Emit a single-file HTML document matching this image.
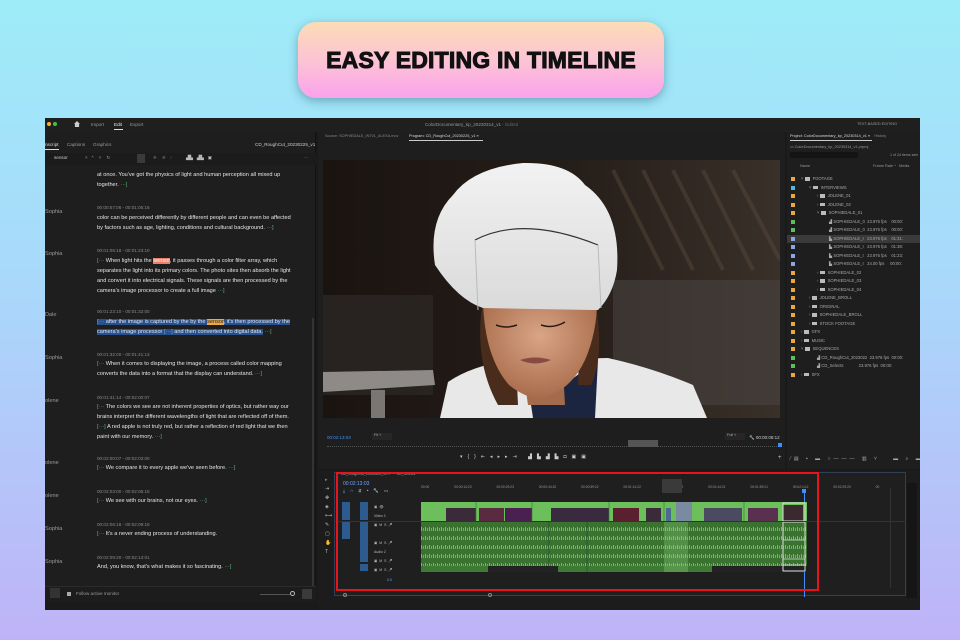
<!DOCTYPE html>
<html><head><meta charset="utf-8">
<style>
*{margin:0;padding:0;box-sizing:border-box}
body{width:960px;height:640px;overflow:hidden;background:linear-gradient(180deg,#9eecf8 0%,#a9d8fb 45%,#bfb3f7 100%);font-family:"Liberation Sans",sans-serif;position:relative}
.pill{position:absolute;left:298px;top:22px;width:366px;height:76px;border-radius:18px;background:linear-gradient(180deg,#fcdcb6 0%,#fcc4d4 50%,#fba2ec 100%);box-shadow:0 3px 10px rgba(40,90,110,.45);display:flex;align-items:center;justify-content:center;font-weight:900;font-size:23px;letter-spacing:.2px;color:#111;-webkit-text-stroke:1px #111}
.app{position:absolute;left:45px;top:118px;width:875px;height:492px;background:#1a1a1a;overflow:hidden}
.a{position:absolute;white-space:nowrap}
.t{font-size:5.6px;color:#e6e6e6;line-height:10px}
.ts{font-size:4.6px;color:#8a8a8a}
.nm{font-size:5.6px;color:#9a9a9a}
.g{color:#5fb07a}
.dim{font-size:4.6px;color:#9a9a9a}
.prow{position:absolute;left:0;height:8px;width:134px;font-size:4.2px;color:#a8a8a8;white-space:nowrap;line-height:8px}
.sq{position:absolute;left:4px;top:2px;width:4px;height:4px}
.fold{display:inline-block;width:5px;height:3.5px;background:#bbb;margin-right:3px;vertical-align:middle}
</style></head><body>
<div class="pill">EASY EDITING IN TIMELINE</div>

<div class="app">
 <div class="a" style="left:0;top:0;width:875px;height:14px;background:#1f1f1f"></div>
 <div class="a" style="left:2px;top:4px;width:4px;height:4px;border-radius:50%;background:#f0b429"></div>
 <div class="a" style="left:8px;top:4px;width:4px;height:4px;border-radius:50%;background:#3fc24a"></div>
 <div class="a" style="left:29px;top:3px;width:6px;height:6px;background:#ccc;clip-path:polygon(50% 0,100% 50%,85% 50%,85% 100%,15% 100%,15% 50%,0 50%)"></div>
 <div class="a dim" style="left:46px;top:4px">Import</div>
 <div class="a dim" style="left:69px;top:4px;color:#eee">Edit</div>
 <div class="a" style="left:69px;top:11px;width:9px;height:1px;background:#ddd"></div>
 <div class="a dim" style="left:85px;top:4px">Export</div>
 <div class="a dim" style="left:380px;top:4px;color:#999">ColorDocumentary_kp_20230314_v1 <span style="color:#666">- Edited</span></div>
 <div class="a dim" style="left:812px;top:4px;font-size:3.8px">TEXT-BASED EDITING</div>

 <div class="a" style="left:0;top:14px;width:271px;height:470px;background:#1e1e1e;border-right:1px solid #111"></div>
 <div class="a dim" style="left:0;top:24px;color:#ddd">nscript</div>
 <div class="a" style="left:0;top:31px;width:14px;height:1px;background:#ddd"></div>
 <div class="a dim" style="left:22px;top:24px">Captions</div>
 <div class="a dim" style="left:48px;top:24px">Graphics</div>
 <div class="a dim" style="left:210px;top:24px;color:#ccc">CD_RoughCut_20230225_v1</div>
 <div class="a" style="left:0;top:35px;width:271px;height:12px;background:#1b1b1b"></div>
 <div class="a dim" style="left:9px;top:37px;color:#ccc">sensor</div>
 <div class="a dim" style="left:40px;top:37px">×&nbsp;&nbsp;&nbsp;^&nbsp;&nbsp;&nbsp;&nbsp;˅&nbsp;&nbsp;&nbsp;&nbsp;↻</div>
 <div class="a" style="left:92px;top:36px;width:8px;height:9px;background:#3a3a3a"></div>
 <div class="a dim" style="left:108px;top:37px;color:#666">✥&nbsp;&nbsp;&nbsp;&nbsp;✥&nbsp;&nbsp;&nbsp;&nbsp;⁄</div>
 <div class="a dim" style="left:141px;top:37px;color:#bbb">▟▙&nbsp;&nbsp;&nbsp;▟▙&nbsp;&nbsp;&nbsp;▣</div>
 <div class="a dim" style="left:259px;top:37px">···</div>
 <div class="a" style="left:267px;top:200px;width:2px;height:270px;background:#333"></div>

 <div class="a t" style="left:52px;top:52px">at once. You've got the physics of light and human perception all mixed up<br>together. <span class="g">···]</span></div>

 <div class="a nm" style="left:0;top:91px">Sophia</div>
 <div class="a ts" style="left:52px;top:87px">00:00:57:06 - 00:01:05:16</div>
 <div class="a t" style="left:52px;top:95px">color can be perceived differently by different people and can even be affected<br>by factors such as age, lighting, conditions and cultural background. <span class="g">···]</span></div>

 <div class="a nm" style="left:0;top:133px">Sophia</div>
 <div class="a ts" style="left:52px;top:130px">00:01:05:18 - 00:01:23:10</div>
 <div class="a t" style="left:52px;top:138px"><span class="g">[···</span> When light hits the <span style="background:#e8806d;color:#fff">sensor</span>, it passes through a color filter array, which<br>separates the light into its primary colors. The photo sites then absorb the light<br>and convert it into electrical signals. These signals are then processed by the<br>camera's image processor to create a full image <span class="g">···]</span></div>

 <div class="a nm" style="left:0;top:194px">Dale</div>
 <div class="a ts" style="left:52px;top:191px">00:01:23:10 - 00:01:32:00</div>
 <div class="a t" style="left:52px;top:199px"><span style="background:#27508f"><span class="g">[···</span> after the image is captured by the by the <span style="background:#e8a94a;color:#222">sensor</span>, it's then processed by the</span><br><span style="background:#27508f">camera's image processor <span style="color:#7ab">[···]</span> and then converted into digital data.</span> <span class="g">···]</span></div>

 <div class="a nm" style="left:0;top:237px">Sophia</div>
 <div class="a ts" style="left:52px;top:234px">00:01:32:00 - 00:01:41:13</div>
 <div class="a t" style="left:52px;top:241px"><span class="g">[···</span> When it comes to displaying the image, a process called color mapping<br>converts the data into a format that the display can understand. <span class="g">···]</span></div>

 <div class="a nm" style="left:0;top:280px">olene</div>
 <div class="a ts" style="left:52px;top:277px">00:01:41:14 - 00:02:00:07</div>
 <div class="a t" style="left:52px;top:284px"><span class="g">[···</span> The colors we see are not inherent properties of optics, but rather way our<br>brains interpret the different wavelengths of light that are reflected off of them.<br><span class="g">[···]</span> A red apple is not truly red, but rather a reflection of red light that we then<br>paint with our memory. <span class="g">···]</span></div>

 <div class="a nm" style="left:0;top:342px">olene</div>
 <div class="a ts" style="left:52px;top:338px">00:02:00:07 - 00:02:03:00</div>
 <div class="a t" style="left:52px;top:345px"><span class="g">[···</span> We compare it to every apple we've seen before. <span class="g">···]</span></div>

 <div class="a nm" style="left:0;top:375px">olene</div>
 <div class="a ts" style="left:52px;top:371px">00:02:03:00 - 00:02:06:15</div>
 <div class="a t" style="left:52px;top:378px"><span class="g">[···</span> We see with our brains, not our eyes. <span class="g">···]</span></div>

 <div class="a nm" style="left:0;top:408px">Sophia</div>
 <div class="a ts" style="left:52px;top:404px">00:02:06:18 - 00:02:09:16</div>
 <div class="a t" style="left:52px;top:411px"><span class="g">[···</span> It's a never ending process of understanding.</div>

 <div class="a nm" style="left:0;top:441px">Sophia</div>
 <div class="a ts" style="left:52px;top:437px">00:02:09:20 - 00:02:13:01</div>
 <div class="a t" style="left:52px;top:444px">And, you know, that's what makes it so fascinating. <span class="g">···]</span></div>

 <div class="a" style="left:0;top:468px;width:271px;height:16px;background:#1c1c1c;border-top:1px solid #2a2a2a"></div>
 <div class="a" style="left:5px;top:470px;width:10px;height:10px;background:#333"></div>
 <div class="a" style="left:22px;top:474px;width:4px;height:4px;background:#aaa"></div>
 <div class="a dim" style="left:31px;top:473px">Follow active monitor</div>
 <div class="a" style="left:215px;top:476px;width:30px;height:1px;background:#555"></div>
 <div class="a" style="left:245px;top:473px;width:5px;height:5px;border:1px solid #bbb;border-radius:50%"></div>
 <div class="a" style="left:257px;top:471px;width:10px;height:10px;background:#3a3a3a"></div>

 <div class="a" style="left:273px;top:14px;width:467px;height:337px;background:#1e1e1e"></div>
 <div class="a" style="left:280px;top:16px;font-size:3.8px;color:#888">Source: SOPHIEDALE_INT01_ALEXA.mov</div>
 <div class="a" style="left:364px;top:16px;font-size:3.8px;color:#ddd">Program: CD_RoughCut_20230225_v1 ≡</div>
 <div class="a" style="left:364px;top:22px;width:74px;height:1px;background:#ccc"></div>
 <svg class="a" style="left:278px;top:42px" width="457" height="258" viewBox="0 0 457 258">
  <defs>
   <linearGradient id="bg" x1="0" y1="0" x2="1" y2="0"><stop offset="0" stop-color="#1a1411"/><stop offset=".5" stop-color="#241c17"/><stop offset="1" stop-color="#3a302a"/></linearGradient>
   <linearGradient id="hat" x1="0" y1="0" x2="0" y2="1"><stop offset="0" stop-color="#f2f2f2"/><stop offset="1" stop-color="#dadada"/></linearGradient>
   <radialGradient id="face" cx=".5" cy=".4" r=".6"><stop offset="0" stop-color="#d9a585"/><stop offset="1" stop-color="#a86c4c"/></radialGradient>
  </defs>
  <rect width="457" height="258" fill="url(#bg)"/>
  <g stroke="#5a4a3c" stroke-width="4" opacity=".45">
   <line x1="290" y1="10" x2="340" y2="110"/><line x1="320" y1="10" x2="370" y2="110"/><line x1="350" y1="10" x2="400" y2="110"/><line x1="380" y1="10" x2="430" y2="110"/><line x1="410" y1="10" x2="457" y2="100"/>
  </g>
  <rect x="290" y="120" width="167" height="125" fill="#47423f" opacity=".6"/>
  <rect x="0" y="135" width="110" height="100" fill="#2e2926" opacity=".7"/>
  <path d="M0 212 L110 210 L112 225 L0 232 Z" fill="#8d8a87"/>
  <rect x="48" y="230" width="14" height="28" fill="#7a7674"/>
  <!-- shoulders -->
  <path d="M117 258 L125 222 Q150 205 190 200 L285 198 Q330 208 370 225 L384 258 Z" fill="#e8e8e8"/>
  <path d="M205 225 L245 222 L275 200 L272 258 L210 258 Z" fill="#1b2540"/>
  <!-- hair -->
  <path d="M160 140 Q150 200 175 245 L195 245 L190 140 Z" fill="#4a2c1c"/>
  <path d="M272 140 Q282 195 268 225 L255 225 L258 140 Z" fill="#4a2c1c"/>
  <!-- neck -->
  <path d="M200 210 L240 210 L242 245 L205 245 Z" fill="#a46a4c"/>
  <!-- face -->
  <path d="M160 135 Q160 195 186 225 Q205 240 220 238 Q248 230 262 200 Q275 170 274 135 Z" fill="url(#face)"/>
  <path d="M197 200 Q212 195 228 200 Q212 207 197 200Z" fill="#8a4a44"/>
  <path d="M173 165 Q183 169 194 165 M218 165 Q230 169 242 162" stroke="#2a1a14" stroke-width="1.5" fill="none"/>
  <!-- hat -->
  <path d="M112 105 Q105 60 130 35 Q150 8 200 3 Q245 2 262 25 Q298 50 294 110 Q290 135 275 150 L270 150 L160 148 Q135 140 112 105Z" fill="url(#hat)"/>
  <path d="M152 80 Q200 55 275 85" stroke="#333" stroke-width="1.2" fill="none"/>
  <path d="M152 80 L155 150 M275 85 L278 148" stroke="#bbb" stroke-width="1" fill="none"/>
 </svg>
 <div class="a" style="left:282px;top:317px;font-size:4.5px;color:#4a90e2">00:02:13:03</div>
 <div class="a" style="left:327px;top:315px;width:20px;height:7px;background:#262626;font-size:3.8px;color:#aaa;padding-left:2px">Fit ˅</div>
 <div class="a" style="left:680px;top:315px;width:20px;height:7px;background:#262626;font-size:3.8px;color:#aaa;padding-left:2px">Full ˅</div>
 <div class="a" style="left:704px;top:317px;font-size:4.5px;color:#ccc">🔧 00:00:08:12</div>
 <div class="a" style="left:282px;top:328px;width:450px;height:3px;border-top:1px dotted #555"></div>
 <div class="a" style="left:583px;top:322px;width:30px;height:7px;background:#555"></div>
 <div class="a" style="left:733px;top:325px;width:4px;height:4px;background:#3b8fff"></div>
 <div class="a" style="left:415px;top:336px;font-size:5px;color:#ccc;letter-spacing:5px">▾{}⇤◂▸▸⇥ ▟▙▟▙◘▣▣</div>
 <div class="a" style="left:733px;top:337px;font-size:6px;color:#ccc">+</div>

 <div class="a" style="left:742px;top:14px;width:133px;height:337px;background:#1e1e1e"></div>
 <div class="a" style="left:745px;top:16px;font-size:3.8px;color:#ddd">Project: ColorDocumentary_kp_20230314_v1 ≡ &nbsp;&nbsp;&nbsp;<span style="color:#888">History</span></div>
 <div class="a" style="left:745px;top:22px;width:82px;height:1px;background:#ccc"></div>
 <div class="a" style="left:745px;top:26px;font-size:3.8px;color:#999">▭ ColorDocumentary_kp_20230314_v1.prproj</div>
 <div class="a" style="left:745px;top:34px;width:68px;height:6px;background:#141414"></div>
 <div class="a" style="left:845px;top:35px;font-size:3.6px;color:#999">1 of 24 items sele</div>
 <div class="a" style="left:755px;top:46px;font-size:3.8px;color:#999">Name</div>
 <div class="a" style="left:828px;top:46px;font-size:3.8px;color:#999">Frame Rate ^ &nbsp;&nbsp;Media</div>
 <div class="a" style="left:742px;top:57px;width:133px;height:210px">
  <div class="prow" style="top:0"><i class="sq" style="background:#e8a740"></i><span style="margin-left:14px">˅ <b class="fold"></b>FOOTAGE</span></div>
  <div class="prow" style="top:8.5px"><i class="sq" style="background:#4fb9d6"></i><span style="margin-left:22px">˅ <b class="fold"></b>INTERVIEWS</span></div>
  <div class="prow" style="top:17px"><i class="sq" style="background:#e8a740"></i><span style="margin-left:30px">› <b class="fold"></b>JOLENE_01</span></div>
  <div class="prow" style="top:25.5px"><i class="sq" style="background:#e8a740"></i><span style="margin-left:30px">› <b class="fold"></b>JOLENE_02</span></div>
  <div class="prow" style="top:34px"><i class="sq" style="background:#e8a740"></i><span style="margin-left:30px">˅ <b class="fold"></b>SOPHIEDALE_01</span></div>
  <div class="prow" style="top:42.5px"><i class="sq" style="background:#5cbf5c"></i><span style="margin-left:42px">▟ SOPHIEDALE_0 &nbsp;23.976 fps &nbsp;&nbsp;&nbsp;00:00:</span></div>
  <div class="prow" style="top:51px"><i class="sq" style="background:#5cbf5c"></i><span style="margin-left:42px">▟ SOPHIEDALE_0 &nbsp;23.976 fps &nbsp;&nbsp;&nbsp;00:00:</span></div>
  <div class="prow" style="top:59.5px;background:#3a3a3a"><i class="sq" style="background:#8aa8e0"></i><span style="margin-left:42px">▙ SOPHIEDALE_I &nbsp;&nbsp;23.976 fps &nbsp;&nbsp;&nbsp;01:31:</span></div>
  <div class="prow" style="top:68px"><i class="sq" style="background:#8aa8e0"></i><span style="margin-left:42px">▙ SOPHIEDALE_I &nbsp;&nbsp;23.976 fps &nbsp;&nbsp;&nbsp;01:36:</span></div>
  <div class="prow" style="top:76.5px"><i class="sq" style="background:#8aa8e0"></i><span style="margin-left:42px">▙ SOPHIEDALE_I &nbsp;&nbsp;23.976 fps &nbsp;&nbsp;&nbsp;01:23:</span></div>
  <div class="prow" style="top:85px"><i class="sq" style="background:#8aa8e0"></i><span style="margin-left:42px">▙ SOPHIEDALE_I &nbsp;&nbsp;24.00 fps &nbsp;&nbsp;&nbsp;&nbsp;00:00:</span></div>
  <div class="prow" style="top:93.5px"><i class="sq" style="background:#e8a740"></i><span style="margin-left:30px">› <b class="fold"></b>SOPHIEDALE_02</span></div>
  <div class="prow" style="top:102px"><i class="sq" style="background:#e8a740"></i><span style="margin-left:30px">› <b class="fold"></b>SOPHIEDALE_03</span></div>
  <div class="prow" style="top:110.5px"><i class="sq" style="background:#e8a740"></i><span style="margin-left:30px">› <b class="fold"></b>SOPHIEDALE_04</span></div>
  <div class="prow" style="top:119px"><i class="sq" style="background:#e8a740"></i><span style="margin-left:22px">› <b class="fold"></b>JOLENE_BROLL</span></div>
  <div class="prow" style="top:127.5px"><i class="sq" style="background:#e8a740"></i><span style="margin-left:22px">› <b class="fold"></b>ORIGINAL</span></div>
  <div class="prow" style="top:136px"><i class="sq" style="background:#e8a740"></i><span style="margin-left:22px">› <b class="fold"></b>SOPHIEDALE_BROLL</span></div>
  <div class="prow" style="top:144.5px"><i class="sq" style="background:#e8a740"></i><span style="margin-left:22px">› <b class="fold"></b>STOCK FOOTAGE</span></div>
  <div class="prow" style="top:153px"><i class="sq" style="background:#e8a740"></i><span style="margin-left:14px">› <b class="fold"></b>GFX</span></div>
  <div class="prow" style="top:161.5px"><i class="sq" style="background:#e8a740"></i><span style="margin-left:14px">› <b class="fold"></b>MUSIC</span></div>
  <div class="prow" style="top:170px"><i class="sq" style="background:#e8a740"></i><span style="margin-left:14px">˅ <b class="fold"></b>SEQUENCES</span></div>
  <div class="prow" style="top:178.5px"><i class="sq" style="background:#5cbf5c"></i><span style="margin-left:30px">▟ CD_RoughCut_2023022 &nbsp;23.976 fps &nbsp;00:00:</span></div>
  <div class="prow" style="top:187px"><i class="sq" style="background:#5cbf5c"></i><span style="margin-left:30px">▟ CD_Selects &nbsp;&nbsp;&nbsp;&nbsp;&nbsp;&nbsp;&nbsp;&nbsp;&nbsp;&nbsp;&nbsp;&nbsp;23.976 fps &nbsp;00:00:</span></div>
  <div class="prow" style="top:195.5px"><i class="sq" style="background:#e8a740"></i><span style="margin-left:14px">› <b class="fold"></b>SFX</span></div>
 </div>
 <div class="a" style="left:745px;top:338px;font-size:5px;color:#aaa;letter-spacing:3px"><span style="color:#5cbf5c">⁄</span>▤ ▪ ▬ ○——— ▥ ˅&nbsp;&nbsp; ▬ ⌕ ▬ ▬</div>

 <div class="a" style="left:273px;top:352px;width:602px;height:140px;background:#1c1c1c"></div>
 <div class="a" style="left:289px;top:354px;width:572px;height:124px;border:1px solid #2f3f55;background:#1f1f1f"></div>
 <div class="a" style="left:280px;top:358px;font-size:5px;color:#3b8fff;line-height:9px">▸<br><span style="color:#bbb">⇥<br>✥<br>◈<br>⟷<br>✎<br>▢<br>✋<br>T</span></div>
 <div class="a" style="left:296px;top:354px;font-size:3.5px;color:#aaa">CD_RoughCut_20230225_v1 ≡ &nbsp;&nbsp;&nbsp;&nbsp;&nbsp;&nbsp;CD_Selects</div>
 <div class="a" style="left:298px;top:363px;font-size:5px;color:#6aa8ff">00:02:13:03</div>
 <div class="a" style="left:298px;top:370px;font-size:4.5px;color:#6aa8ff;letter-spacing:5px">⤓∩<span style="color:#bbb">⇵•🔧▭</span></div>
 <div class="a" style="left:376px;top:367px;width:440px;font-size:3.3px;color:#999;word-spacing:24px">00:00 00:00:14:23 00:00:29:23 00:00:44:22 00:00:59:22 00:01:14:22 00:01:29:22 00:01:44:21 00:01:59:21 00:02:14:2 00:02:29:20 00</div>
 <div class="a" style="left:617px;top:361px;width:20px;height:14px;background:#3a3a3a"></div>
 <div class="a" style="left:757px;top:371px;width:4px;height:4px;background:#3b8fff"></div>
 <div class="a" style="left:759px;top:375px;width:1px;height:104px;background:#3b8fff"></div>
 <div class="a" style="left:297px;top:384px;width:8px;height:18px;background:#2d5a8f"></div>
 <div class="a" style="left:315px;top:384px;width:8px;height:18px;background:#2d5a8f"></div>
 <div class="a" style="left:297px;top:404px;width:8px;height:17px;background:#2d5a8f"></div>
 <div class="a" style="left:315px;top:404px;width:8px;height:40px;background:#2d5a8f"></div>
 <div class="a" style="left:315px;top:446px;width:8px;height:7px;background:#2d5a8f"></div>
 <div class="a" style="left:329px;top:385px;font-size:3.5px;color:#bbb;line-height:9px">▣ &nbsp;👁<br>Video 1<br>▣ &nbsp;M &nbsp;S &nbsp;🎤<br><br>▣ &nbsp;M &nbsp;S &nbsp;🎤<br>Audio 2<br>▣ &nbsp;M &nbsp;S &nbsp;🎤<br>▣ &nbsp;M &nbsp;S &nbsp;🎤</div>
 <div class="a" style="left:289px;top:403px;width:572px;height:1px;background:#333"></div>
 <div class="a" style="left:376px;top:384px;width:386px;height:19px;background:#6cbf5a"></div>
 <svg class="a" style="left:376px;top:384px" width="386" height="19">
  <g fill="#3a2a3a">
   <rect x="25" y="6" width="30" height="13"/><rect x="58" y="6" width="25" height="13" fill="#5a2a40"/><rect x="84" y="6" width="27" height="13" fill="#4a2050"/>
   <rect x="130" y="6" width="58" height="13" fill="#3a2a40"/><rect x="192" y="6" width="26" height="13" fill="#5a2030"/><rect x="225" y="6" width="15" height="13"/>
   <rect x="245" y="6" width="5" height="13" fill="#4a6a90"/><rect x="255" y="0" width="16" height="19" fill="#7a8aa0"/><rect x="283" y="6" width="38" height="13" fill="#4a4a60"/><rect x="327" y="6" width="30" height="13" fill="#5a3050"/><rect x="362" y="3" width="20" height="16" fill="#3a2a30"/>
  </g>
  <g stroke="#3a7a3a" stroke-width=".6"><line x1="55" y1="0" x2="55" y2="19"/><line x1="111" y1="0" x2="111" y2="19"/><line x1="188" y1="0" x2="188" y2="19"/><line x1="243" y1="0" x2="243" y2="19"/><line x1="323" y1="0" x2="323" y2="19"/></g>
  <rect x="362" y="1" width="22" height="18" fill="none" stroke="#ddd" stroke-width="1"/>
 </svg>
 <svg class="a" style="left:376px;top:404px" width="386" height="50">
  <defs><pattern id="wf" width="4" height="9" patternUnits="userSpaceOnUse"><rect width="4" height="9" fill="#3a7230"/><rect x="0" y="5" width="1" height="4" fill="#6cc45a"/><rect x="2" y="6" width="1" height="3" fill="#62b552"/></pattern></defs>
  <rect x="0" y="0" width="386" height="37" fill="url(#wf)"/>
  <rect x="0" y="37" width="386" height="7" fill="url(#wf)"/>
  <rect x="0" y="44" width="67" height="6" fill="#3e7a34"/>
  <rect x="67" y="44" width="70" height="6" fill="#222"/>
  <rect x="137" y="44" width="154" height="6" fill="#3e7a34"/>
  <rect x="291" y="44" width="95" height="6" fill="#222"/>
  <rect x="243" y="0" width="24" height="50" fill="#9ee68a" opacity=".25"/>
  <g stroke="#234" stroke-width=".5"><line x1="128" y1="0" x2="128" y2="44"/><line x1="166" y1="0" x2="166" y2="50"/></g>
  <rect x="362" y="0" width="22" height="49" fill="none" stroke="#ddd" stroke-width="1"/>
  <line x1="362" y1="18" x2="384" y2="18" stroke="#ddd" stroke-width=".8"/><line x1="362" y1="37" x2="384" y2="37" stroke="#ddd" stroke-width=".8"/><line x1="362" y1="43" x2="384" y2="43" stroke="#ddd" stroke-width=".8"/>
 </svg>
 <div class="a" style="left:342px;top:460px;font-size:3.5px;color:#6aa8ff">0.0</div>
 <div class="a" style="left:298px;top:477px;width:150px;height:1px;background:#444"></div>
 <div class="a" style="left:298px;top:475px;width:4px;height:4px;border:1px solid #888;border-radius:50%"></div>
 <div class="a" style="left:443px;top:475px;width:4px;height:4px;border:1px solid #888;border-radius:50%"></div>
 <div class="a" style="left:845px;top:370px;width:1px;height:100px;background:#333"></div>
 <div class="a" style="left:862px;top:365px;width:10px;height:115px;background:#151515"></div>
 <div class="a" style="left:291px;top:354px;width:483px;height:119px;border:2px solid #e8141b"></div>
</div>
</body></html>
